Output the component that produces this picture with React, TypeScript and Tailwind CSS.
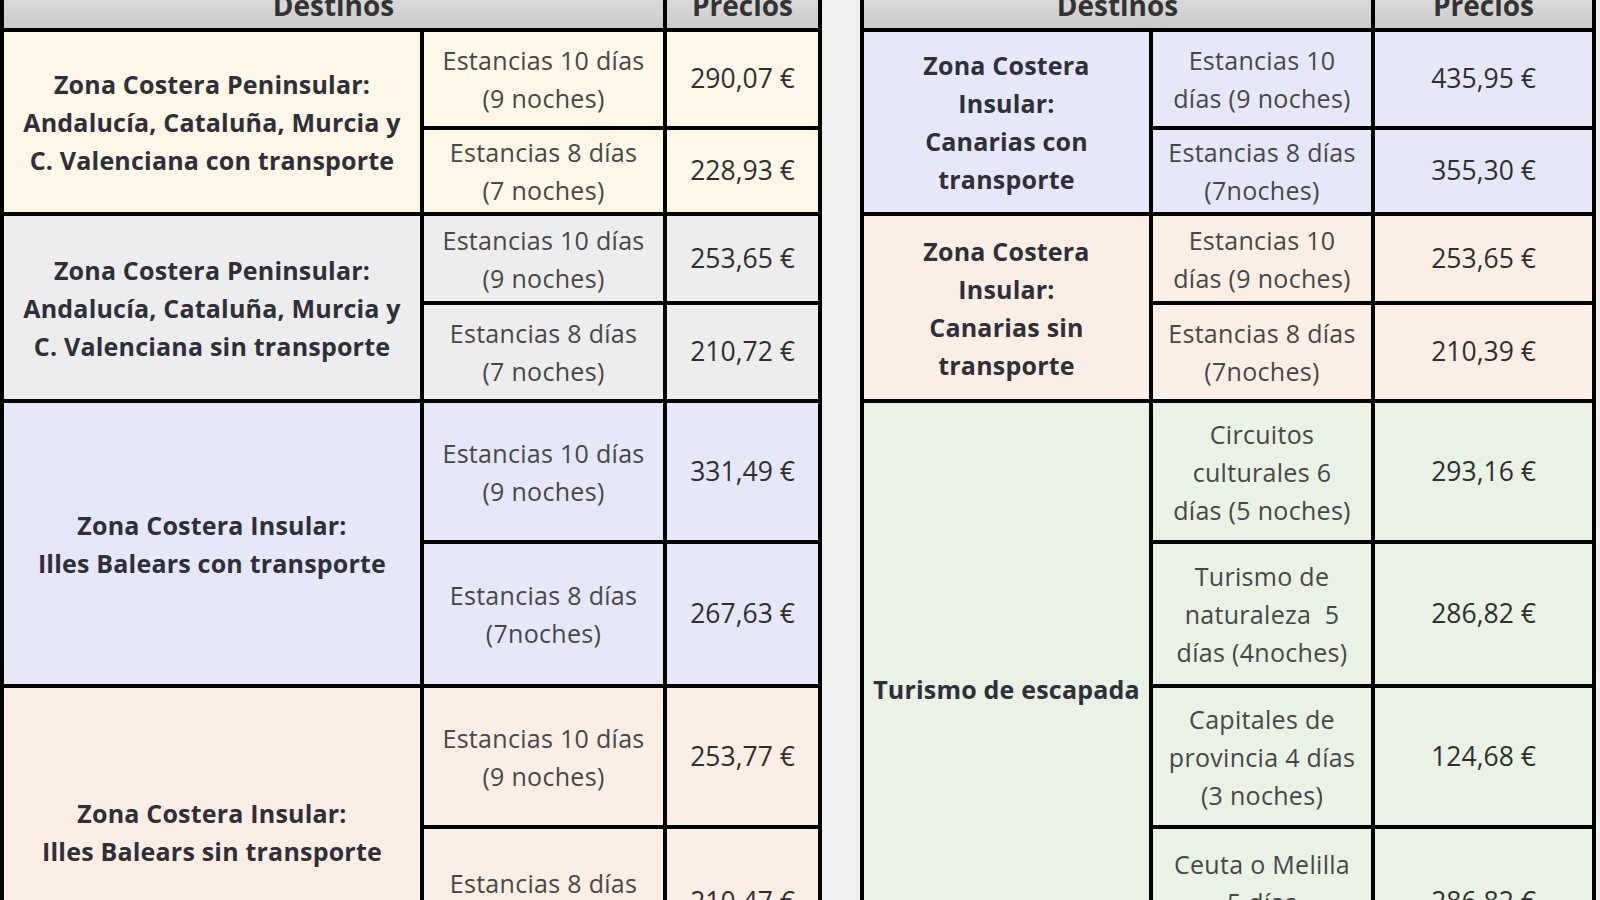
import React from 'react'

type Group = {
  label: React.ReactNode
  bg: string
  rows: { stay: React.ReactNode; price: string }[]
}

const rowHeights = 'grid-rows-[46px_94px_82px_85px_94px_137px_140px_137px_146px]'

const leftGroups: Group[] = [
  {
    label: (
      <>
        Zona Costera Peninsular:
        <br />
        Andalucía, Cataluña, Murcia y
        <br />
        C. Valenciana con transporte
      </>
    ),
    bg: 'bg-[#fcf7e6]',
    rows: [
      { stay: <>Estancias 10 días<br />(9 noches)</>, price: '290,07 €' },
      { stay: <>Estancias 8 días<br />(7 noches)</>, price: '228,93 €' },
    ],
  },
  {
    label: (
      <>
        Zona Costera Peninsular:
        <br />
        Andalucía, Cataluña, Murcia y
        <br />
        C. Valenciana sin transporte
      </>
    ),
    bg: 'bg-[#ededed]',
    rows: [
      { stay: <>Estancias 10 días<br />(9 noches)</>, price: '253,65 €' },
      { stay: <>Estancias 8 días<br />(7 noches)</>, price: '210,72 €' },
    ],
  },
  {
    label: (
      <>
        Zona Costera Insular:
        <br />
        Illes Balears con transporte
      </>
    ),
    bg: 'bg-[#e6e7f9]',
    rows: [
      { stay: <>Estancias 10 días<br />(9 noches)</>, price: '331,49 €' },
      { stay: <>Estancias 8 días<br />(7noches)</>, price: '267,63 €' },
    ],
  },
  {
    label: (
      <>
        Zona Costera Insular:
        <br />
        Illes Balears sin transporte
      </>
    ),
    bg: 'bg-[#fbefe5]',
    rows: [
      { stay: <>Estancias 10 días<br />(9 noches)</>, price: '253,77 €' },
      { stay: <>Estancias 8 días<br />(7 noches)</>, price: '210,47 €' },
    ],
  },
]

const rightGroups: Group[] = [
  {
    label: (
      <>
        Zona Costera
        <br />
        Insular:
        <br />
        Canarias con
        <br />
        transporte
      </>
    ),
    bg: 'bg-[#e6e7f9]',
    rows: [
      { stay: <>Estancias 10<br />días (9 noches)</>, price: '435,95 €' },
      { stay: <>Estancias 8 días<br />(7noches)</>, price: '355,30 €' },
    ],
  },
  {
    label: (
      <>
        Zona Costera
        <br />
        Insular:
        <br />
        Canarias sin
        <br />
        transporte
      </>
    ),
    bg: 'bg-[#fbefe5]',
    rows: [
      { stay: <>Estancias 10<br />días (9 noches)</>, price: '253,65 €' },
      { stay: <>Estancias 8 días<br />(7noches)</>, price: '210,39 €' },
    ],
  },
  {
    label: <>Turismo de escapada</>,
    bg: 'bg-[#e9f2e5]',
    rows: [
      { stay: <>Circuitos<br />culturales 6<br />días (5 noches)</>, price: '293,16 €' },
      { stay: <>Turismo de<br />naturaleza&nbsp; 5<br />días (4noches)</>, price: '286,82 €' },
      { stay: <>Capitales de<br />provincia 4 días<br />(3 noches)</>, price: '124,68 €' },
      { stay: <>Ceuta o Melilla<br />5 días<br />(4 noches)</>, price: '286,82 €' },
    ],
  },
]

const spanClass: Record<number, string> = {
  2: 'row-span-2',
  4: 'row-span-4',
}

function PriceTable({ groups, cols }: { groups: Group[]; cols: string }) {
  return (
    <div className={`grid ${cols} ${rowHeights} gap-[4px] bg-black p-[4px] shrink-0`}>
      <div className="col-span-2 flex items-center justify-center bg-gradient-to-b from-[#e2e2e2] to-[#cbcbcb] text-[28px] font-bold text-[#333]">
        Destinos
      </div>
      <div className="flex items-center justify-center bg-gradient-to-b from-[#e2e2e2] to-[#cbcbcb] text-[28px] font-bold text-[#333]">
        Precios
      </div>
      {groups.map((g, gi) => (
        <React.Fragment key={gi}>
          <div
            className={`${spanClass[g.rows.length]} ${g.bg} flex items-center justify-center text-center text-[25px] leading-[38px] tracking-[0.2px] font-bold text-[#2e2f38]`}
          >
            <div>{g.label}</div>
          </div>
          {g.rows.map((r, ri) => (
            <React.Fragment key={ri}>
              <div className={`${g.bg} flex items-center justify-center text-center text-[25px] leading-[38px] tracking-[0.3px] text-[#474747]`}>
                <div>{r.stay}</div>
              </div>
              <div className={`${g.bg} flex items-center justify-center text-[26.5px] text-[#2f2f2f]`}>
                {r.price}
              </div>
            </React.Fragment>
          ))}
        </React.Fragment>
      ))}
    </div>
  )
}

export default function App() {
  return (
    <div className="h-[900px] w-[1600px] overflow-hidden bg-[#f0f0f0] font-['Open_Sans',_'Lato',_sans-serif]">
      <div className="mt-[-22px] flex gap-[38px]">
        <PriceTable groups={leftGroups} cols="grid-cols-[416px_239px_151px]" />
        <PriceTable groups={rightGroups} cols="grid-cols-[285px_218px_217px]" />
      </div>
    </div>
  )
}
